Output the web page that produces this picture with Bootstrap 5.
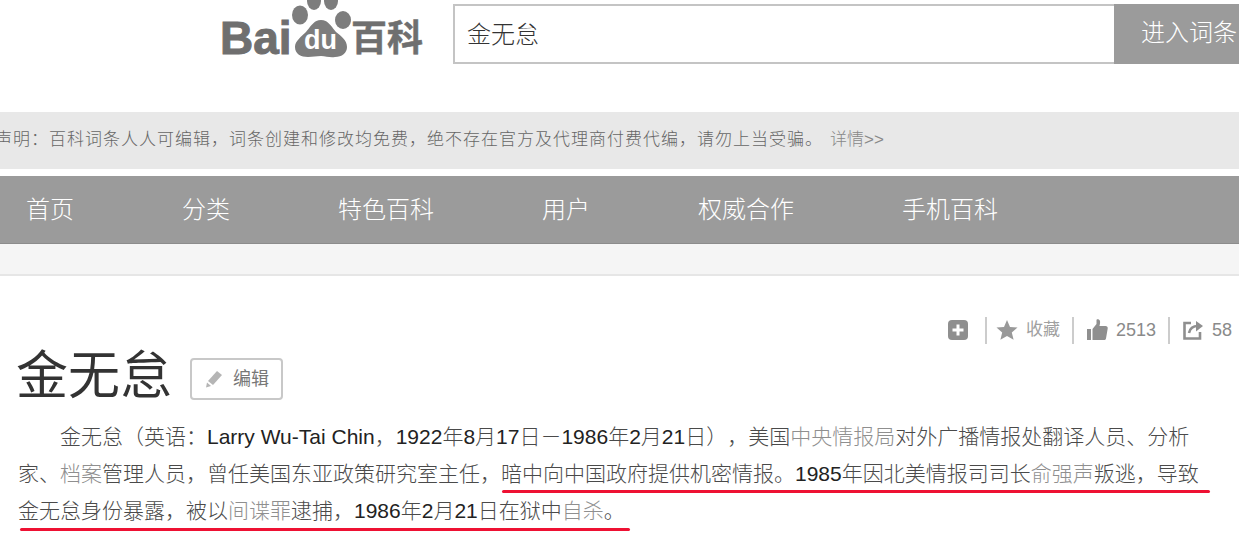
<!DOCTYPE html>
<html lang="zh">
<head>
    <meta charset="UTF-8">
    <title>金无怠_百度百科</title>
    <link href="https://cdn.jsdelivr.net/npm/bootstrap@5.3.3/dist/css/bootstrap.min.css" rel="stylesheet">
    <style>
        html, body { height: 555px; overflow: hidden; }
        body { font-family: "Liberation Sans", "Noto Sans CJK SC", sans-serif; background: #fff; color: #333; text-spacing-trim: space-all; }
        .cabecera { height: 112px; padding-left: 220px; align-items: flex-start; }
        .logo-bk { width: 233px; height: 60px; flex: none; position: relative; color: #6f6f6f; font-weight: 700; }
        .logo-bk svg { position: absolute; left: 64px; top: 0; }
        .logo-bai { position: absolute; left: 0; top: 10px; font-size: 46px; line-height: 56px; -webkit-text-stroke: 1px #6f6f6f; }
        .logo-du { position: absolute; left: 84px; top: 25px; font-size: 27px; line-height: 30px; color: #fff; }
        .logo-zh { position: absolute; left: 131px; top: 18px; font-size: 36px; line-height: 42px; white-space: nowrap; -webkit-text-stroke: .5px #6f6f6f; }
        .busqueda { height: 60px; margin-top: 4px; width: 786px; flex: none; }
        .busqueda input { width: 661px; height: 60px; border: 2px solid #c4c4c4; border-right: 0; font-size: 24px; padding: 0 12px 3px; color: #333; outline: 0; font-weight: 300; }
        .busqueda button { width: 125px; height: 60px; border: 0; background: #9b9b9b; color: #fff; font-size: 24px; font-weight: 300; text-align: left; padding: 0 0 2px 27px; white-space: nowrap; overflow: hidden; }
        .aviso { height: 57px; background: #e8e8e8; color: #666; font-size: 17px; letter-spacing: 1px; line-height: 56px; margin-left: -5px; white-space: nowrap; font-weight: 300; }
        .aviso a { color: #888; margin-left: 7px; text-decoration: none; letter-spacing: 0; }
        .barra-nav { height: 68px; margin-top: 7px; background: #9b9b9b; border-bottom: 1px solid #8c8c8c; padding-left: 26px; gap: 108px; color: #fff; font-size: 24px; line-height: 68px; font-weight: 300; }
        .barra-nav a { color: #fff; text-decoration: none; }
        .sub-barra { height: 32px; background: #f5f5f5; border-bottom: 2px solid #e6e6e6; }
        .acciones { justify-content: flex-end; align-items: center; height: 28px; margin-top: 40px; padding-right: 7px; color: #8a8a8a; font-size: 18px; }
        .acciones svg { display: block; flex: none; }
        .sep { width: 2px; height: 27px; background: #ccc; margin: 0 13px 0 12px; }
        .sep-1 { margin: 0 9px 0 17px; }
        .txt-claro { color: #a0a0a0; font-size: 17px; }
        .tit-fila { height: 62px; margin-top: 1px; padding-left: 16px; align-items: center; }
        .tit-fila h1 { font-size: 52px; line-height: 62px; margin: 0; color: #333; font-weight: 400; }
        .btn-editar { width: 93px; height: 42px; margin-left: 18px; margin-top: 6px; border: 2px solid #c8c8c8; border-radius: 4px; color: #777; font-size: 18px; gap: 9px; padding: 0 0 0 12px; background: #fff; }
        .parrafo { position: relative; margin: 11px 0 0; padding: 0 18px; font-size: 21px; line-height: 37px; color: #4a4a4a; width: 1239px; font-weight: 300; }
        .parrafo .ren { display: block; white-space: nowrap; }
        .parrafo .ren-1 { padding-left: 42px; }
        .parrafo b { font-weight: 400; color: #222; }
        .parrafo a { color: #8f8f8f; text-decoration: none; }
        .subraya { position: absolute; height: 3px; background: #ee1133; border-radius: 2px; }
        .sub-1 { left: 502px; top: 72px; width: 708px; }
        .sub-2 { left: 20px; top: 110px; width: 610px; }
    </style>
</head>
<body>
    <div class="d-flex cabecera">
        <div class="logo-bk">
            <svg width="72" height="58" viewBox="0 0 72 58" fill="#7d7d7d">
                <ellipse cx="16" cy="15" rx="8" ry="9.500" />
                <ellipse cx="30" cy="1" rx="7" ry="9" />
                <ellipse cx="47" cy="1" rx="7" ry="9" />
                <ellipse cx="59" cy="20" rx="8" ry="9" />
                <path d="M37 20c-7 0-10 6-15 12-5 5-11 9-11 15 0 7 6 10 13 10 5 0 8-1 13-1s9 2 14 1c7 0 12-4 12-10 0-7-6-11-11-15-5-6-8-12-15-12z" />
            </svg>
            <span class="logo-bai">Bai</span>
            <span class="logo-du">du</span>
            <span class="logo-zh">百科</span>
        </div>
        <form class="d-flex busqueda">
            <input type="text" value="金无怠">
            <button type="button">进入词条</button>
        </form>
    </div>

    <div class="aviso">声明：百科词条人人可编辑，词条创建和修改均免费，绝不存在官方及代理商付费代编，请勿上当受骗。<a href="#">详情&gt;&gt;</a></div>

    <nav class="d-flex barra-nav">
        <a href="#">首页</a>
        <a href="#">分类</a>
        <a href="#">特色百科</a>
        <a href="#">用户</a>
        <a href="#">权威合作</a>
        <a href="#">手机百科</a>
    </nav>
    <div class="sub-barra"></div>

    <div class="d-flex acciones">
        <svg width="20" height="20" viewBox="0 0 20 20"><rect width="20" height="20" rx="4" fill="#8f8f8f"/><path d="M8.500 4.500h3v4h4v3h-4v4h-3v-4h-4v-3h4z" fill="#fff"/></svg>
        <span class="sep sep-1"></span>
        <svg width="22" height="20" viewBox="0 0 22 20"><path d="M11 0l3 7 7.500.6-5.700 4.900 1.800 7.300L11 16l-6.600 3.800 1.800-7.300L.5 7.600 8 7z" fill="#999"/></svg>
        <span class="ms-2 txt-claro">收藏</span>
        <span class="sep"></span>
        <svg width="21" height="22" viewBox="0 0 21 22"><path d="M0 10h4v11H0zM5.500 10l4-5V1c0-1 3-1 3.500 1 .4 2-.5 5-.5 5h6c1.500 0 2.500 1 2.200 2.500L19 19.500c-.3 1-1 1.500-2 1.500H5.500z" fill="#8f8f8f"/></svg>
        <span class="ms-2">2513</span>
        <span class="sep"></span>
        <svg width="21" height="20" viewBox="0 0 21 20" fill="none" stroke="#8f8f8f" stroke-width="2.600"><path d="M8 3H1.500v15.500H17V12"/><path d="M6 13c1-5 5-7 9-7" /><path d="M13 1L20 6l-7 5.500z" fill="#8f8f8f" stroke="none"/></svg>
        <span class="ms-2">58</span>
    </div>

    <div class="d-flex tit-fila">
        <h1>金无怠</h1>
        <button type="button" class="btn-editar d-flex align-items-center">
            <svg width="20" height="20" viewBox="0 0 20 20"><path d="M13 2l5 4-9 10-5-4z" fill="#b5b5b5"/><path d="M3 13.500l4 3.500-5 1.500z" fill="#b5b5b5"/></svg>
            <span>编辑</span>
        </button>
    </div>

    <p class="parrafo">
        <span class="ren ren-1">金无怠（英语：<b>Larry Wu-Tai Chin</b>，<b>1922</b>年<b>8</b>月<b>17</b>日－<b>1986</b>年<b>2</b>月<b>21</b>日），美国<a href="#">中央情报局</a>对外广播情报处翻译人员、分析</span>
        <span class="ren">家、<a href="#">档案</a>管理人员，曾任美国东亚政策研究室主任，暗中向中国政府提供机密情报。<b>1985</b>年因北美情报司司长<a href="#">俞强声</a>叛逃，导致</span>
        <span class="ren">金无怠身份暴露，被以<a href="#">间谍罪</a>逮捕，<b>1986</b>年<b>2</b>月<b>21</b>日在狱中<a href="#">自杀</a>。</span>
        <span class="subraya sub-1"></span>
        <span class="subraya sub-2"></span>
    </p>
    <script src="https://cdn.jsdelivr.net/npm/bootstrap@5.3.3/dist/js/bootstrap.bundle.min.js"></script>
</body>
</html>
